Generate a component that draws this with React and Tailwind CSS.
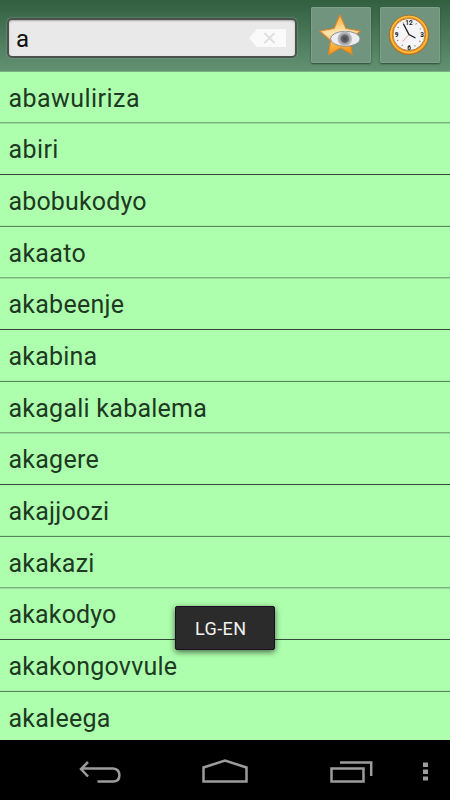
import clsx from "clsx"

const words = [
  { text: "abawuliriza", size: "h-[51px]", line: "border-[#79b37b] shadow-[0_1px_#95dc95]", spacing: "tracking-[0.45px]" },
  { text: "abiri", size: "h-[52px]", line: "border-[#34493a]", spacing: "tracking-[0.4px]" },
  { text: "abobukodyo", size: "h-[52px]", line: "border-[#568557] shadow-[0_-1px_#a2f0a2]", spacing: "tracking-[0.15px]" },
  { text: "akaato", size: "h-[51px]", line: "border-[#79b37b] shadow-[0_1px_#95dc95]", spacing: "tracking-[0.3px]" },
  { text: "akabeenje", size: "h-[52px]", line: "border-[#34493a]", spacing: "tracking-[0.25px]" },
  { text: "akabina", size: "h-[52px]", line: "border-[#568557] shadow-[0_-1px_#a2f0a2]", spacing: "tracking-[0.2px]" },
  { text: "akagali kabalema", size: "h-[51px]", line: "border-[#79b37b] shadow-[0_1px_#95dc95]", spacing: "tracking-[0.25px]" },
  { text: "akagere", size: "h-[52px]", line: "border-[#34493a]", spacing: "tracking-[0.25px]" },
  { text: "akajjoozi", size: "h-[52px]", line: "border-[#568557] shadow-[0_-1px_#a2f0a2]", spacing: "tracking-[0.25px]" },
  { text: "akakazi", size: "h-[51px]", line: "border-[#79b37b] shadow-[0_1px_#95dc95]", spacing: "tracking-[0.2px]" },
  { text: "akakodyo", size: "h-[52px]", line: "border-[#34493a]", spacing: "tracking-[0.15px]" },
  { text: "akakongovvule", size: "h-[52px]", line: "border-[#568557] shadow-[0_-1px_#a2f0a2]", spacing: "tracking-[0.2px]" },
  { text: "akaleega", size: "h-[52px]", line: "border-transparent", spacing: "tracking-[0.25px]" },
]

function StarIcon() {
  return (
    <svg className="shrink-0" width="60" height="56" viewBox="0 0 60 56">
      <defs>
        <linearGradient id="star" x1="0" y1="0" x2="0.2" y2="1">
          <stop offset="0" stopColor="#fba92c" />
          <stop offset="0.28" stopColor="#fcc565" />
          <stop offset="0.5" stopColor="#fee5b0" />
          <stop offset="0.75" stopColor="#fbb84a" />
          <stop offset="1" stopColor="#f59a18" />
        </linearGradient>
        <radialGradient id="iris">
          <stop offset="0" stopColor="#454749" />
          <stop offset="0.5" stopColor="#66686a" />
          <stop offset="0.65" stopColor="#a0a2a4" />
          <stop offset="1" stopColor="#c3c4c9" />
        </radialGradient>
      </defs>
      <path d="M29 7.800L35 21.500L49.300 24L38.800 33.500L41.300 47.300L29.500 41L17.500 47.800L19.500 33.500L8.700 24L23 21.500Z" fill="url(#star)" stroke="#d9862a" strokeWidth="1.200" strokeLinejoin="round" />
      <ellipse cx="34.300" cy="31.800" rx="14.800" ry="7.500" fill="#ececf3" stroke="#858a8c" strokeWidth="0.900" />
      <circle cx="33.800" cy="31.800" r="7.300" fill="url(#iris)" />
    </svg>
  )
}

function ClockIcon() {
  return (
    <svg className="shrink-0" width="60" height="56" viewBox="0 0 60 56">
      <circle cx="29" cy="28" r="19.700" fill="#e98b10" stroke="#9c6a2c" strokeWidth="0.800" />
      <circle cx="29" cy="27.500" r="18" fill="none" stroke="#ffbe45" strokeWidth="1.500" />
      <circle cx="29" cy="27.500" r="16" fill="#f5f5f8" stroke="#a8763a" strokeWidth="0.800" />
      <circle cx="29" cy="27.500" r="12.800" fill="none" stroke="#666" strokeWidth="1.600" strokeDasharray="0.800 5.902" />
      <g fontFamily="Roboto" fontSize="6.500" fontWeight="700" fill="#222" textAnchor="middle">
        <text x="29" y="18">12</text>
        <text x="42" y="30">3</text>
        <text x="29" y="42.500">6</text>
        <text x="16.500" y="30">9</text>
      </g>
      <path d="M29 27.500L22.500 34.500" stroke="#f09a80" strokeWidth="0.900" />
      <path d="M23.500 17L29 27.500L35.500 31" fill="none" stroke="#222" strokeWidth="1.400" />
    </svg>
  )
}

function IconButton({ children }) {
  return (
    <button className="w-[60px] h-[56px] rounded-[2px] bg-[#70947e] shadow-[0_1px_2px_#254c34,inset_0_0_0_1px_#7f9f8b] flex items-center justify-center">
      {children}
    </button>
  )
}

function Header() {
  return (
    <header className="h-[72px] shrink-0 flex items-start pl-[7px] pt-[7px] bg-linear-to-b from-[#315f40] to-[#639273] border-b border-[#79b182]">
      <div className="mt-[11px] w-[290px] h-[40px] rounded-[5px] border-2 border-[#4b524d] bg-[#e9e9e9] shadow-[0_0_2px_#8fa897,inset_0_1px_2px_#aaa] flex items-center justify-between pl-[7px] pr-[9px]">
        <span className="pt-px text-[24px] leading-none text-[#111]">a</span>
        <svg width="37" height="18" viewBox="0 0 37 18">
          <path d="M0 9L8 0H37V18H8Z" fill="#fafafa" />
          <path d="M15.500 4L25.500 14M25.500 4L15.500 14" stroke="#dfdfdf" strokeWidth="2" />
        </svg>
      </div>
      <div className="ml-[14px] flex gap-[9px]">
        <IconButton>
          <StarIcon />
        </IconButton>
        <IconButton>
          <ClockIcon />
        </IconButton>
      </div>
    </header>
  )
}

function NavBar() {
  return (
    <nav className="h-[60px] shrink-0 bg-black">
      <svg width="450" height="60" viewBox="0 0 450 60" fill="none" stroke="#9c9c9c" strokeWidth="2.500">
        <path d="M88 22L81 29L88 36.500M81 28.500H113Q119.400 29 119.400 35.200Q119.400 41.500 113 41.500H97.500" />
        <path d="M203.500 41.500V27.500L225 20.500L246.500 27.500V41.500Z" />
        <path d="M331.500 28.500H363.500V41.500H331.500ZM340 22.500H371.200V36" />
        <path d="M425.500 22.500V27M425.500 29.500V34M425.500 36.500V40.500" strokeWidth="5" />
      </svg>
    </nav>
  )
}

export default function App() {
  return (
    <div className="relative w-[450px] h-[800px] overflow-hidden flex flex-col bg-[#adffad] font-[Roboto,sans-serif]">
      <Header />
      <ul className="flex-1 min-h-0 overflow-hidden">
        {words.map((word) => (
          <li key={word.text} className={clsx("flex flex-col", word.size)}>
            <span className={clsx("flex-1 flex items-center pl-[8.5px] pt-[2px] text-[25px] leading-none text-[#203923]", word.spacing)}>
              {word.text}
            </span>
            <div className={clsx("border-t", word.line)} />
          </li>
        ))}
      </ul>
      <NavBar />
      <div className="absolute left-[175px] top-[606px] w-[100px] h-[44px] rounded-[2px] bg-[#2b2b2b] border border-[#1c0f22] shadow-[0_2px_6px_rgba(0,0,0,0.6)] flex items-center pl-[19px] pt-px text-[18px] tracking-[0.4px] text-[#f2f2f2]">
        LG-EN
      </div>
    </div>
  )
}
